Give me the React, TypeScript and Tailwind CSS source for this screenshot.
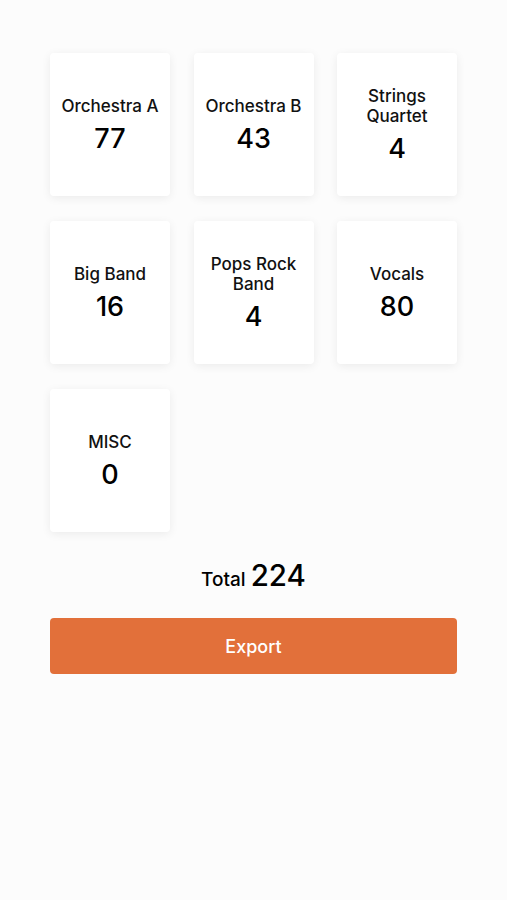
const GROUPS = [
  { name: "Orchestra A", count: 77 },
  { name: "Orchestra B", count: 43 },
  { name: "Strings Quartet", count: 4 },
  { name: "Big Band", count: 16 },
  { name: "Pops Rock Band", count: 4 },
  { name: "Vocals", count: 80 },
  { name: "MISC", count: 0 },
];

export default function App() {
  const total = GROUPS.reduce((s, g) => s + g.count, 0);

  return (
    <div
      className="min-h-[900px] w-full bg-[#fcfcfc] px-[50px] pt-[53px] text-black"
      style={{ fontFamily: "Inter, 'Noto Sans', sans-serif" }}
    >
      <div className="grid grid-cols-[120px_120px_120px] justify-between gap-y-[25px]">
        {GROUPS.map((g) => (
          <div
            key={g.name}
            className="flex h-[143px] flex-col items-center justify-center rounded-[4px] bg-white px-2 pt-[2px] text-center shadow-[0_2px_10px_rgba(0,0,0,0.07)]"
          >
            <div className="text-[17px] font-medium leading-[20px] text-[#111]">{g.name}</div>
            <div className="mt-[7px] text-[27px] font-medium leading-[32px]">{g.count}</div>
          </div>
        ))}
      </div>

      <div className="mt-[21px] flex items-baseline justify-center gap-[5px]">
        <span className="text-[19px] font-medium">Total</span>
        <span className="text-[29.5px] font-medium">{total}</span>
      </div>

      <button className="mt-[21px] flex h-[56px] w-full items-center justify-center rounded-[4px] bg-[#e2703a] text-[18px] font-medium text-white">
        Export
      </button>
    </div>
  );
}
